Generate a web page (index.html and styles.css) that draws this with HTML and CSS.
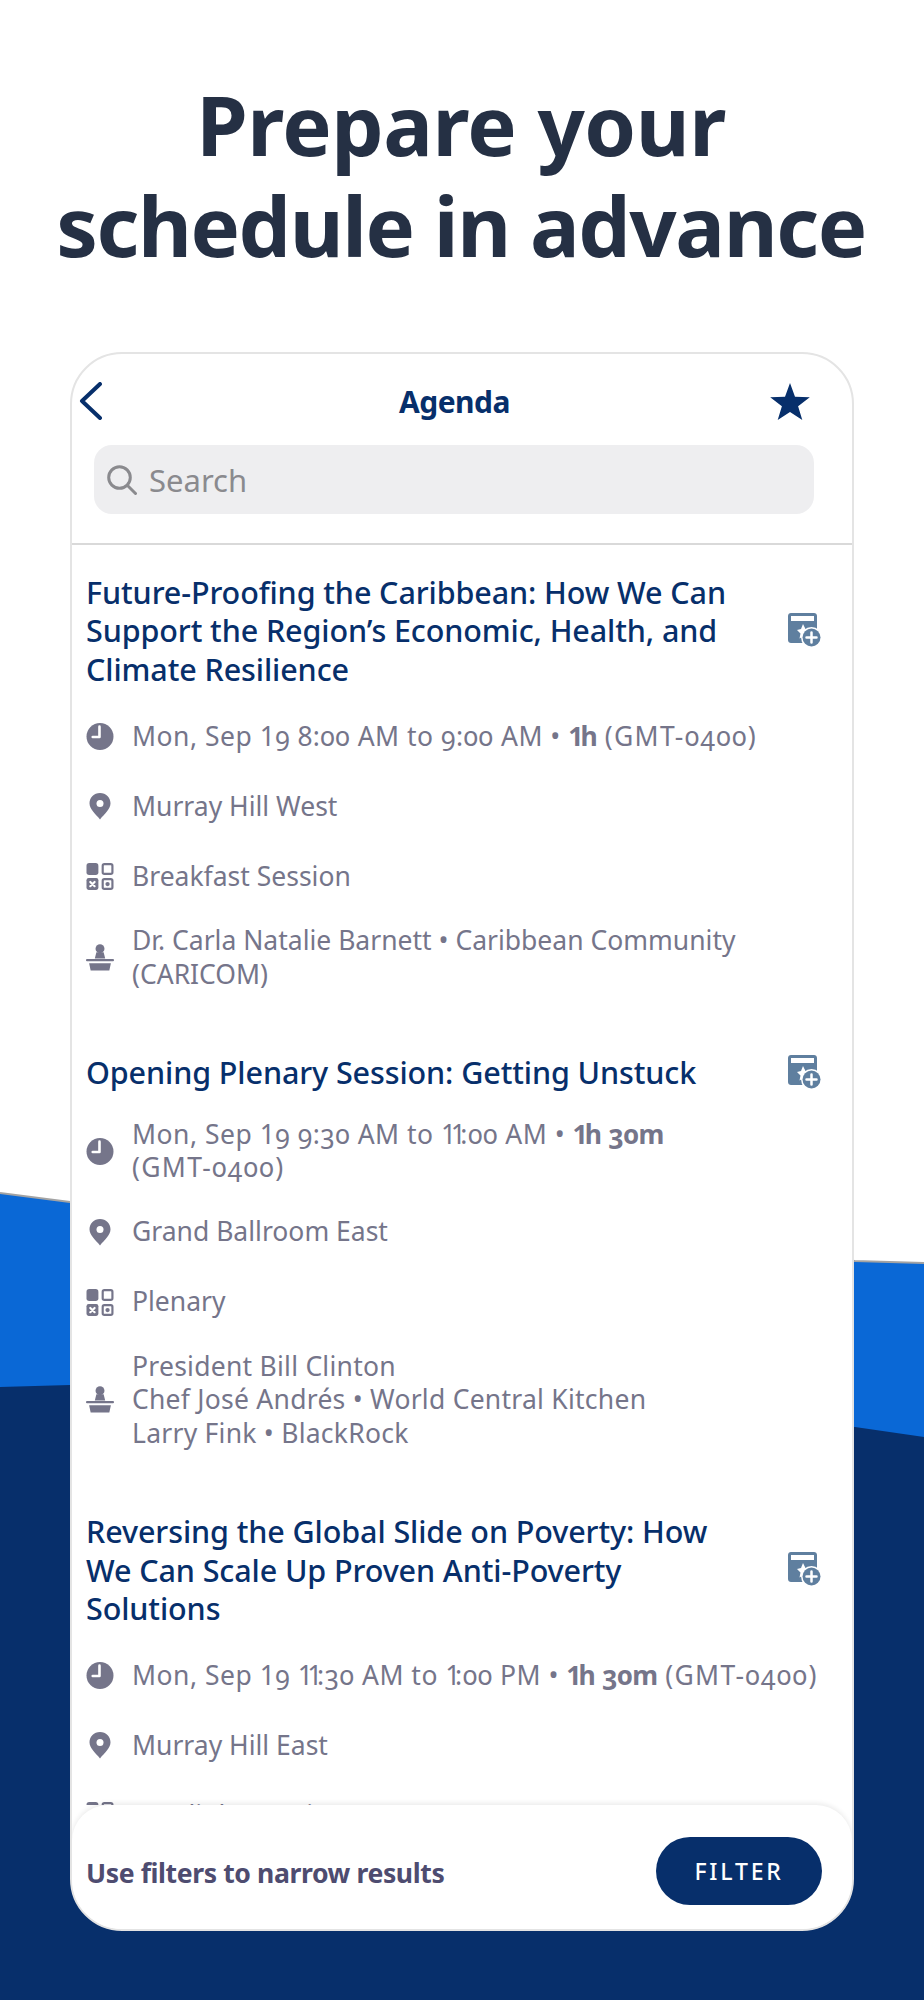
FILE: index.html
```html
<!DOCTYPE html>
<html>
<head>
<title>Agenda</title>
<link rel="stylesheet" href="styles.css">
</head>
<body>
<svg class="defs" width="0" height="0">
  <symbol id="i-clock" viewBox="0 0 26 26">
    <circle cx="13" cy="13" r="13"/>
    <path class="hand" d="M12.500 3.500V13.500H6"/>
  </symbol>
  <symbol id="i-pin" viewBox="0 0 22 27">
    <path d="M11 0C5 0 .5 4.500 .5 10.300C.5 16.500 6.500 20.800 11 26.500C15.500 20.800 21.500 16.500 21.500 10.300C21.500 4.500 17 0 11 0Z"/>
    <circle class="dot" cx="11" cy="10.500" r="3.500"/>
  </symbol>
  <symbol id="i-grid" viewBox="0 0 25 25">
    <rect x="0" y="0" width="11" height="11" rx="2.500"/>
    <rect class="outline" x="15" y="1" width="9" height="9" rx="1.500"/>
    <rect x="0" y="14" width="11" height="11" rx="2"/>
    <path class="hand thin" d="M3.500 17.500L7.500 21.500M7.500 17.500L3.500 21.500"/>
    <rect class="outline" x="15" y="15" width="9" height="9" rx="1.500"/>
    <circle cx="19.500" cy="19.500" r="2"/>
  </symbol>
  <symbol id="i-speaker" viewBox="0 0 27 26">
    <circle cx="13.500" cy="4.500" r="4.300"/>
    <path d="M10 8H17L18.500 14H8.500Z"/>
    <rect x="0" y="14.500" width="27" height="2.200" rx="1"/>
    <path d="M3 18.500H24L22.500 25.500H4.500Z"/>
  </symbol>
  <symbol id="i-add" viewBox="0 0 34 35">
    <path class="add-bg" d="M3 0H26C27.700 0 29 1.300 29 3V28C29 29.700 27.700 30 26 30H3C1.300 30 0 28.700 0 27V3C0 1.300 1.300 0 3 0Z"/>
    <rect class="dot" x="3" y="3" width="23" height="5"/>
    <path class="dot" d="M15 11L17.500 16L22 17L18 22L15 23.500L11.500 25.500L12.500 20.500L9 17L13 16Z"/>
    <circle class="dot" cx="23.500" cy="24.500" r="10.500"/>
    <circle class="add-bg" cx="23.500" cy="24.500" r="9"/>
    <path class="hand" d="M23.500 19.500V29.500M18.500 24.500H28.500"/>
  </symbol>
</svg>

<svg class="backdrop" width="924" height="2000" viewBox="0 0 924 2000">
  <polygon class="wave-light" points="0,1193 70,1202 855,1261 924,1263 924,2000 0,2000"/>
  <polyline class="wave-edge" points="0,1193 70,1202 855,1261 924,1263"/>
  <polygon class="wave-dark" points="0,1387 70,1385 855,1427 924,1437 924,2000 0,2000"/>
</svg>

<div class="page">
  <h1 class="headline"><span class="headline-first">Prepare your</span><br>schedule in advance</h1>

  <div class="phone">
    <div class="topbar">
      <svg class="back" width="24" height="38" viewBox="0 0 24 38"><path d="M21 2L3 19L21 36"/></svg>
      <div class="topbar-title">Agenda</div>
      <svg class="star" width="40" height="37" viewBox="0 0 40 37"><path d="M20 0L25 13.800L39.800 14.200L28.100 23.300L32.300 37L20 29L7.700 37L11.900 23.300L.2 14.200L15 13.800Z"/></svg>
    </div>

    <div class="search">
      <svg class="search-icon" width="30" height="30" viewBox="0 0 30 30"><circle cx="12.500" cy="12.500" r="10.800"/><path d="M20.500 20.500L28.500 28.500"/></svg>
      <span>Search</span>
    </div>

    <div class="list">
      <div class="session">
        <div class="session-head">
          <div class="session-title">Future-Proofing the Caribbean: How We Can<br>Support the Region’s Economic, Health, and<br>Climate Resilience</div>
          <svg class="add"><use href="#i-add"/></svg>
        </div>
        <div class="meta time"><svg class="ico"><use href="#i-clock"/></svg><div>Mon, Sep <i>1</i>9 8:00 AM to 9:00 AM • <b><i class="t">1</i>h</b> <span class="zone">(GMT-0400)</span></div></div>
        <div class="meta"><svg class="ico"><use href="#i-pin"/></svg><div>Murray Hill West</div></div>
        <div class="meta"><svg class="ico"><use href="#i-grid"/></svg><div>Breakfast Session</div></div>
        <div class="meta"><svg class="ico"><use href="#i-speaker"/></svg><div>Dr. Carla Natalie Barnett • Caribbean Community<br>(CARICOM)</div></div>
      </div>

      <div class="session">
        <div class="session-head">
          <div class="session-title">Opening Plenary Session: Getting Unstuck</div>
          <svg class="add"><use href="#i-add"/></svg>
        </div>
        <div class="meta time"><svg class="ico"><use href="#i-clock"/></svg><div>Mon, Sep <i>1</i>9 9:30 AM to <i class="t">11</i>:00 AM • <b><i class="t">1</i>h 30m</b><br><span class="zone">(GMT-0400)</span></div></div>
        <div class="meta"><svg class="ico"><use href="#i-pin"/></svg><div>Grand Ballroom East</div></div>
        <div class="meta"><svg class="ico"><use href="#i-grid"/></svg><div>Plenary</div></div>
        <div class="meta speakers"><svg class="ico"><use href="#i-speaker"/></svg><div>President Bill Clinton<br>Chef José Andrés • World Central Kitchen<br>Larry Fink • BlackRock</div></div>
      </div>

      <div class="session">
        <div class="session-head">
          <div class="session-title">Reversing the Global Slide on Poverty: How<br>We Can Scale Up Proven Anti-Poverty<br>Solutions</div>
          <svg class="add"><use href="#i-add"/></svg>
        </div>
        <div class="meta time"><svg class="ico"><use href="#i-clock"/></svg><div>Mon, Sep <i>1</i>9 <i class="t">11</i>:30 AM to <i class="t">1</i>:00 PM • <b><i class="t">1</i>h 30m</b> <span class="zone">(GMT-0400)</span></div></div>
        <div class="meta"><svg class="ico"><use href="#i-pin"/></svg><div>Murray Hill East</div></div>
        <div class="meta"><svg class="ico"><use href="#i-grid"/></svg><div>Spotlight Session</div></div>
      </div>
    </div>

    <div class="filterbar">
      <div class="filter-hint">Use filters to narrow results</div>
      <div class="filter-btn">FILTER</div>
    </div>
  </div>
</div>
</body>
</html>
```

FILE: styles.css
```css
html, body {
  margin: 0;
  padding: 0;
  background: #fff;
}
body {
  position: relative;
  width: 924px;
  height: 2000px;
  overflow: hidden;
  font-family: "Noto Sans", "Open Sans", sans-serif;
}
.defs {
  position: absolute;
}
.backdrop {
  position: absolute;
  top: 0;
  left: 0;
}
.wave-light {
  fill: #0a68d6;
}
.wave-edge {
  fill: none;
  stroke: #a3a3a3;
  stroke-width: 2;
}
.wave-dark {
  fill: #072f6b;
}
.page {
  position: relative;
  display: flex;
  flex-direction: column;
  align-items: center;
}
.headline {
  margin: 73px 0 0;
  height: 279px;
  padding-right: 2px;
  font-size: 83px;
  line-height: 101px;
  font-weight: 700;
  text-align: center;
  color: #253044;
  letter-spacing: -1.400px;
}
.headline-first {
  letter-spacing: -.5px;
}
.phone {
  width: 784px;
  height: 1579px;
  box-sizing: border-box;
  border: 2px solid #e4e4e4;
  border-radius: 52px;
  background: #fff;
  display: flex;
  flex-direction: column;
  overflow: hidden;
}
.topbar {
  display: flex;
  align-items: center;
  height: 52px;
  margin-top: 21px;
  padding: 0 42px 0 7px;
}
.back {
  fill: none;
  stroke: #072f6b;
  stroke-width: 4;
  stroke-linecap: round;
  stroke-linejoin: round;
}
.star {
  fill: #072f6b;
}
.topbar-title {
  flex: 1;
  padding-left: 36px;
  text-align: center;
  font-size: 30px;
  font-weight: 700;
  color: #072f6b;
  letter-spacing: -.5px;
}
.search {
  display: flex;
  align-items: center;
  gap: 12px;
  height: 69px;
  margin: 18px 38px 0 22px;
  padding: 0 13px;
  border-radius: 18px;
  background: #eeeef0;
  font-size: 31px;
  color: #8a8a8e;
}
.search-icon {
  fill: none;
  stroke: #8a8a8e;
  stroke-width: 3;
  stroke-linecap: round;
}
.list {
  flex: 1;
  min-height: 0;
  margin-top: 29px;
  padding: 28px 30px 0 14px;
  border-top: 2px solid #d9d9d9;
  overflow: hidden;
}
.session {
  display: flex;
  flex-direction: column;
  gap: 25px;
  margin-bottom: 62px;
}
.session-head {
  display: flex;
  align-items: center;
  justify-content: space-between;
  margin-bottom: 1px;
}
.session-title {
  font-size: 30.500px;
  line-height: 38.400px;
  font-weight: 500;
  color: #072f6b;
  letter-spacing: -.1px;
}
.add {
  flex: none;
  width: 34px;
  height: 35px;
}
.add-bg {
  fill: #5f7f9f;
}
.meta {
  display: flex;
  align-items: center;
  gap: 18px;
  min-height: 45px;
  font-size: 26.500px;
  line-height: 33.500px;
  color: #75758a;
  font-variant-numeric: oldstyle-nums;
}
.meta.time {
  letter-spacing: .5px;
  white-space: nowrap;
}
.meta.speakers {
  letter-spacing: .25px;
}
.meta b {
  font-weight: 700;
  letter-spacing: -.3px;
}
.meta i {
  font-style: normal;
  font-variant-numeric: lining-nums;
}
.meta i.t {
  letter-spacing: -5.500px;
}
.meta b i.t {
  letter-spacing: -3px;
}
.zone {
  letter-spacing: 1.300px;
}
.ico {
  flex: none;
  width: 28px;
  height: 27px;
  fill: #75758a;
}
.hand {
  fill: none;
  stroke: #fff;
  stroke-width: 2.500;
  stroke-linecap: round;
  stroke-linejoin: round;
}
.hand.thin {
  stroke-width: 2;
}
.dot {
  fill: #fff;
}
.outline {
  fill: none;
  stroke: #75758a;
  stroke-width: 2;
}
.filterbar {
  flex: none;
  display: flex;
  align-items: center;
  justify-content: space-between;
  height: 124px;
  box-sizing: border-box;
  padding: 8px 30px 0 14px;
  background: #fff;
  border-radius: 36px 36px 0 0;
  box-shadow: 0 -2px 5px rgba(0, 0, 0, .08);
  position: relative;
}
.filter-hint {
  font-size: 26.600px;
  font-weight: 700;
  color: #4e4c70;
  letter-spacing: -.4px;
  padding-top: 4px;
}
.filter-btn {
  width: 166px;
  height: 68px;
  border-radius: 34px;
  background: #072f6b;
  color: #fff;
  font-size: 23px;
  font-weight: 500;
  letter-spacing: 2.800px;
  display: flex;
  align-items: center;
  justify-content: center;
}
```
